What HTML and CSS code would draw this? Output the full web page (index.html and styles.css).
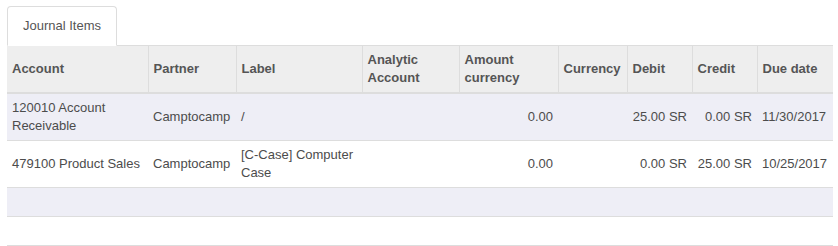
FILE: index.html
```html
<!DOCTYPE html>
<html>
<head>
<meta charset="utf-8">
<link rel="stylesheet" href="styles.css">
</head>
<body>
<div class="page">
  <ul class="tabs">
    <li class="tab active">Journal Items</li>
  </ul>
  <table class="list">
    <colgroup>
      <col style="width:141px">
      <col style="width:88px">
      <col style="width:126px">
      <col style="width:97px">
      <col style="width:99px">
      <col style="width:69px">
      <col style="width:65px">
      <col style="width:65px">
      <col style="width:76px">
    </colgroup>
    <thead>
      <tr>
        <th>Account</th>
        <th>Partner</th>
        <th>Label</th>
        <th>Analytic Account</th>
        <th>Amount currency</th>
        <th>Currency</th>
        <th>Debit</th>
        <th>Credit</th>
        <th>Due date</th>
      </tr>
    </thead>
    <tbody>
      <tr class="odd">
        <td>120010 Account Receivable</td>
        <td>Camptocamp</td>
        <td>/</td>
        <td></td>
        <td class="num">0.00</td>
        <td></td>
        <td class="num">25.00 SR</td>
        <td class="num">0.00 SR</td>
        <td>11/30/2017</td>
      </tr>
      <tr>
        <td>479100 Product Sales</td>
        <td>Camptocamp</td>
        <td>[C-Case] Computer Case</td>
        <td></td>
        <td class="num">0.00</td>
        <td></td>
        <td class="num">0.00 SR</td>
        <td class="num">25.00 SR</td>
        <td>10/25/2017</td>
      </tr>
      <tr class="odd empty">
        <td colspan="9">&nbsp;</td>
      </tr>
      <tr class="empty last">
        <td colspan="9">&nbsp;</td>
      </tr>
    </tbody>
  </table>
</div>
</body>
</html>
```
FILE: styles.css
```css
html, body {
  margin: 0;
  padding: 0;
  background: #fff;
}
body {
  font-family: "Liberation Sans", Arial, sans-serif;
  font-size: 13px;
  line-height: 18px;
  color: #4c4c4c;
}
.page {
  padding: 6px 5px 0 7px;
}
.tabs {
  list-style: none;
  margin: 0;
  padding: 0;
  display: flex;
  border-bottom: 1px solid #ddd;
}
.tab {
  padding: 10px 15px 10px 15px;
  border: 1px solid #ddd;
  border-bottom-color: transparent;
  border-radius: 4px 4px 0 0;
  background: #fff;
  color: #555;
  margin-bottom: -1px;
}
.list {
  width: 826px;
  table-layout: fixed;
  border-collapse: collapse;
  border-spacing: 0;
}
.list th,
.list td {
  padding: 5px;
  vertical-align: middle;
  text-align: left;
}
.list th {
  background: #eeeeee;
  font-weight: bold;
  color: #555;
  border-bottom: 2px solid #dddddd;
  border-left: 1px solid #dddddd;
}
.list th:first-child {
  border-left: none;
}
.list td {
  border-top: 1px solid #dddddd;
}
.list tr.odd td {
  background: #eeeef6;
}
.list tr.last td {
  border-bottom: 1px solid #dddddd;
}
.list td.num {
  text-align: right;
}
```
